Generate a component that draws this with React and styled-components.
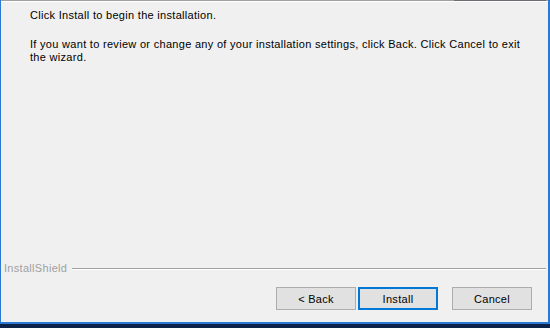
import React from "react";
import styled, { createGlobalStyle } from "styled-components";

const GlobalStyle = createGlobalStyle`
  html, body {
    margin: 0;
    padding: 0;
    width: 550px;
    height: 328px;
    overflow: hidden;
    background: #0d2248;
  }
  #root {
    width: 550px;
    height: 328px;
  }
`;

const Screen = styled.div`
  display: flex;
  flex-direction: column;
  width: 550px;
  height: 328px;
`;

const Window = styled.div`
  display: flex;
  flex-direction: column;
  height: 324px;
  box-sizing: border-box;
  background: #f0f0f0;
  border-left: 1px solid #2b79d2;
  border-right: 2px solid #2b79d2;
  border-bottom: 2px solid #2b79d2;
  font-family: Tahoma, "Liberation Sans", Arial, sans-serif;
  font-size: 11px;
  line-height: 13px;
  letter-spacing: 0.3px;
  color: #000;
`;

const Desktop = styled.div`
  flex: 1;
  background: #0d2248;
`;

const TopRule = styled.div`
  display: flex;
  height: 1px;
  border-bottom: 1px solid #ffffff;
`;

const RuleSegment = styled.div`
  height: 1px;
  flex: ${({ $width }) => ($width ? `0 0 ${$width}px` : "1")};
  background: ${({ $dark }) => ($dark ? "#6b6e72" : "#a0a0a0")};
`;

const Content = styled.div`
  flex: 1;
  padding: 7px 16px 0 29px;
`;

const Para = styled.p`
  margin: 0 0 16px 0;
`;

const EtchedRow = styled.div`
  display: flex;
  align-items: center;
  gap: 5px;
  padding: 0 2px 0 3px;
`;

const Label = styled.span`
  color: #a0a0a0;
  white-space: nowrap;
`;

const Line = styled.div`
  flex: 1;
  height: 1px;
  background: #a0a0a0;
  border-bottom: 1px solid #ffffff;
`;

const ButtonRow = styled.div`
  display: flex;
  justify-content: flex-end;
  padding: 12px 16px 12px 0;
`;

const Button = styled.button`
  width: 80px;
  height: 23px;
  margin-left: ${({ $gap }) => $gap || 0}px;
  padding: 0;
  box-sizing: border-box;
  font-family: inherit;
  font-size: 11px;
  letter-spacing: 0.3px;
  color: #000;
  background: #e1e1e1;
  border: 1px solid ${({ $default }) => ($default ? "#0078d7" : "#adadad")};
  box-shadow: ${({ $default }) => ($default ? "inset 0 0 0 1px #0078d7" : "none")};
  border-radius: 0;
  outline: none;
`;

export default function App() {
  return (
    <Screen>
      <GlobalStyle />
      <Window>
        <TopRule>
          <RuleSegment />
          <RuleSegment $dark $width={92} />
          <RuleSegment $width={2} />
        </TopRule>
        <Content>
          <Para>Click Install to begin the installation.</Para>
          <Para>
            If you want to review or change any of your installation settings,
            click Back. Click Cancel to exit the wizard.
          </Para>
        </Content>
        <EtchedRow>
          <Label>InstallShield</Label>
          <Line />
        </EtchedRow>
        <ButtonRow>
          <Button>&lt; Back</Button>
          <Button $default $gap={2}>Install</Button>
          <Button $gap={14}>Cancel</Button>
        </ButtonRow>
      </Window>
      <Desktop />
    </Screen>
  );
}
